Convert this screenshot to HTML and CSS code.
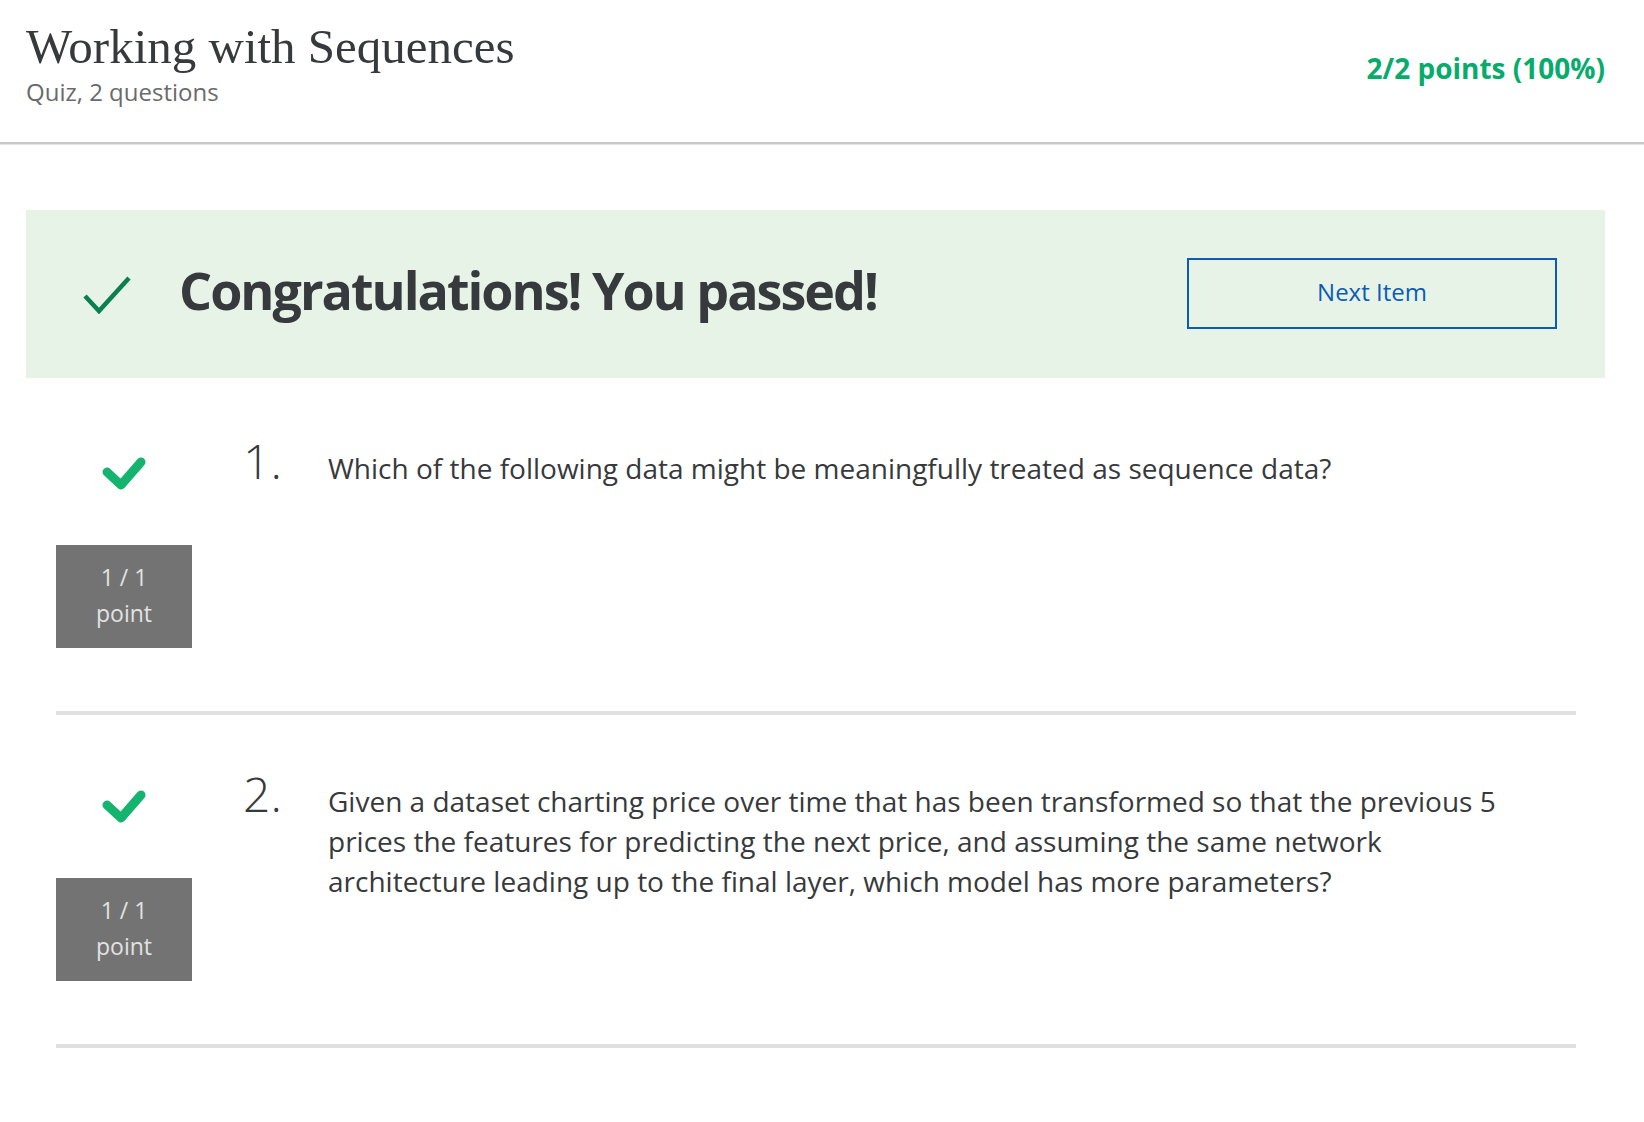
FILE: index.html
```html
<!DOCTYPE html>
<html lang="en">
<head>
<meta charset="utf-8">
<title>Working with Sequences</title>
<link rel="stylesheet" href="styles.css">
</head>
<body>
<header class="header">
  <div class="header-left">
    <h1 class="title">Working with Sequences</h1>
    <div class="subtitle">Quiz, 2 questions</div>
  </div>
  <div class="score">2/2 points (100%)</div>
</header>

<main class="main">
  <section class="banner">
    <svg class="banner-check" width="48" height="38" viewBox="0 0 48 38">
      <path d="M2 20 L16 35 L46 2" fill="none" stroke="#0b7f50" stroke-width="4.5"/>
    </svg>
    <h2 class="banner-text">Congratulations! You passed!</h2>
    <button class="next-btn">Next Item</button>
  </section>

  <div class="questions">
    <div class="question">
      <div class="q-side">
        <svg class="q-check" width="44" height="34" viewBox="0 0 44 34">
          <path d="M5 16 L19 29 L39 6" fill="none" stroke="#14b46f" stroke-width="9" stroke-linecap="round" stroke-linejoin="round"/>
        </svg>
        <div class="q-points">1 / 1<br>point</div>
      </div>
      <div class="q-num">1.</div>
      <div class="q-text">Which of the following data might be meaningfully treated as sequence data?</div>
    </div>

    <div class="question">
      <div class="q-side">
        <svg class="q-check" width="44" height="34" viewBox="0 0 44 34">
          <path d="M5 16 L19 29 L39 6" fill="none" stroke="#14b46f" stroke-width="9" stroke-linecap="round" stroke-linejoin="round"/>
        </svg>
        <div class="q-points">1 / 1<br>point</div>
      </div>
      <div class="q-num">2.</div>
      <div class="q-text">Given a dataset charting price over time that has been transformed so that the previous 5 prices the features for predicting the next price, and assuming the same network architecture leading up to the final layer, which model has more parameters?</div>
    </div>
  </div>
</main>
</body>
</html>
```

FILE: styles.css
```css
* { box-sizing: border-box; }

body {
  margin: 0;
  background: #ffffff;
  font-family: "Open Sans", "Liberation Sans", sans-serif;
  color: #373a3c;
}

.header {
  display: flex;
  justify-content: space-between;
  align-items: flex-start;
  padding: 19px 39px 34px 26px;
  border-bottom: 2px solid #c9c9c9;
  box-shadow: 0 1px 0 #e4e4e4;
}

.title {
  margin: 0;
  font-family: "Liberation Serif", "DejaVu Serif", serif;
  font-weight: 400;
  font-size: 49px;
  line-height: 56px;
  color: #373a3c;
}

.subtitle {
  margin-top: 1px;
  font-size: 24px;
  line-height: 32px;
  color: #6a6a6a;
}

.score {
  margin-top: 30px;
  font-size: 28px;
  line-height: 38px;
  font-weight: 700;
  color: #07ab6b;
}

.main {
  padding: 0 39px 0 26px;
}

.banner {
  margin-top: 66px;
  height: 168px;
  background: #e8f3e7;
  display: flex;
  align-items: center;
  padding: 0 48px 0 57px;
}

.banner-check {
  flex: none;
  margin-top: 2px;
}

.banner-text {
  margin: 0 0 8px 48px;
  font-size: 52px;
  font-weight: 700;
  line-height: 64px;
  color: #373a3c;
  letter-spacing: -2px;
}

.next-btn {
  margin-left: auto;
  margin-bottom: 2px;
  width: 370px;
  height: 71px;
  padding: 0 0 4px;
  background: transparent;
  border: 2px solid #0b5cb5;
  color: #0b5cb5;
  font-family: "Open Sans", "Liberation Sans", sans-serif;
  font-size: 24px;
  cursor: pointer;
}

.questions {
  margin-top: 4px;
  padding: 0 29px 0 30px;
}

.question {
  display: flex;
  align-items: flex-start;
  padding-bottom: 63px;
  border-bottom: 4px solid #e0e0e0;
}

.q-side {
  flex: none;
  width: 136px;
  display: flex;
  flex-direction: column;
  align-items: center;
}

.q-check {
  margin-top: 74px;
}

.q-points {
  margin-top: 55px;
  width: 136px;
  height: 103px;
  background: #737373;
  color: #e2e2e2;
  font-size: 23px;
  line-height: 36px;
  text-align: center;
  padding-top: 14px;
}

.q-num {
  flex: none;
  width: 85px;
  margin-left: 51px;
  margin-top: 49px;
  font-size: 48px;
  font-weight: 300;
  line-height: 60px;
  color: #373a3c;
}

.q-text {
  flex: none;
  width: 1195px;
  margin-top: 66px;
  font-size: 28px;
  line-height: 40px;
  color: #373a3c;
}
```
